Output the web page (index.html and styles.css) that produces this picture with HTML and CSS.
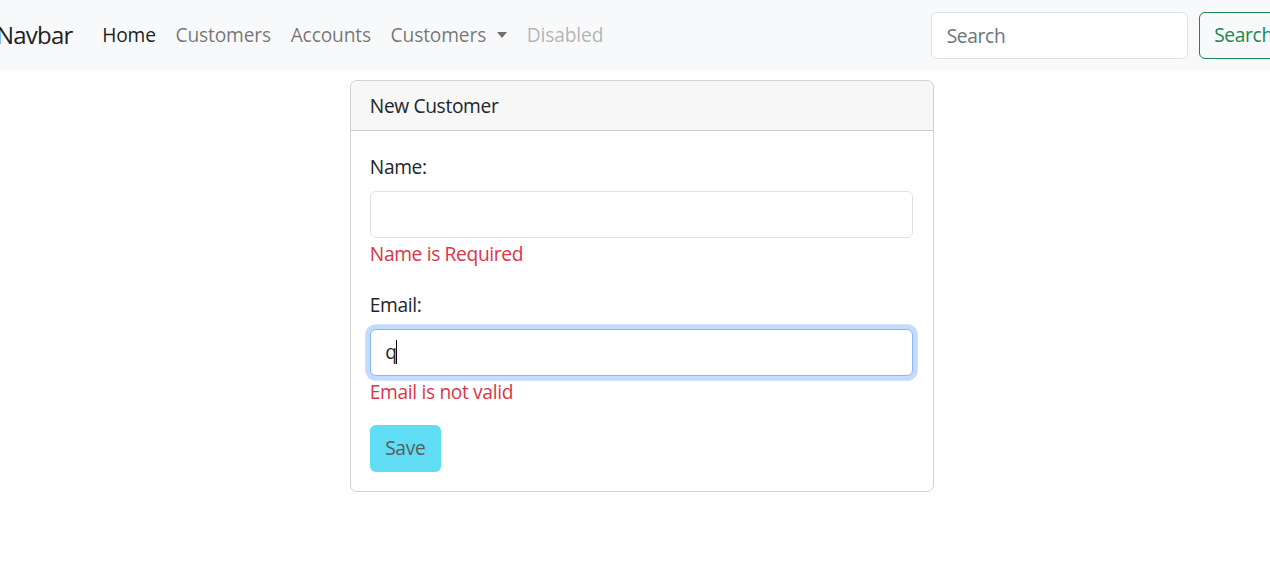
FILE: index.html
```html
<!DOCTYPE html>
<html lang="en">
<head>
<meta charset="utf-8">
<title>New Customer</title>
<link rel="stylesheet" href="styles.css">
</head>
<body>
<div class="page">
  <nav class="navbar">
    <div class="nav-inner">
      <a class="brand" href="#">Navbar</a>
      <ul class="nav-links">
        <li><a class="nav-link active" href="#">Home</a></li>
        <li><a class="nav-link" href="#">Customers</a></li>
        <li><a class="nav-link" href="#">Accounts</a></li>
        <li><a class="nav-link dropdown" href="#">Customers</a></li>
        <li><a class="nav-link disabled" href="#">Disabled</a></li>
      </ul>
      <form class="search-form">
        <input class="search-input" type="search" placeholder="Search">
        <button class="btn-outline-success" type="button">Search</button>
      </form>
    </div>
  </nav>
  <main class="main">
    <div class="card">
      <div class="card-header">New Customer</div>
      <div class="card-body">
        <div class="field">
          <label class="label">Name:</label>
          <input class="control" type="text">
          <div class="error">Name is Required</div>
        </div>
        <div class="field">
          <label class="label">Email:</label>
          <div class="control focused"><span class="typed">q</span><span class="caret"></span></div>
          <div class="error">Email is not valid</div>
        </div>
        <button class="btn-save" type="button" disabled>Save</button>
      </div>
    </div>
  </main>
</div>
</body>
</html>
```

FILE: styles.css
```css
* { box-sizing: border-box; }
html, body { margin: 0; padding: 0; overflow: hidden; }
body {
  font-family: "Open Sans", "Noto Sans", sans-serif;
  font-size: 19.2px;
  line-height: 1.5;
  color: #212529;
  background: #fff;
}
.page {
  width: 1319px;
  margin-left: -16.4px;
}
.navbar {
  background: #f8f9fa;
  height: 70px;
}
.nav-inner {
  height: 100%;
  padding: 0 14.4px;
  display: flex;
  align-items: center;
}
.brand {
  font-size: 24px;
  color: rgba(0,0,0,.9);
  text-decoration: none;
  margin-right: 20px;
  margin-left: -2px;
  letter-spacing: -0.8px;
}
.nav-links {
  list-style: none;
  margin: 0;
  padding: 0;
  display: flex;
  flex: 1;
}
.nav-link {
  display: block;
  padding: 8px 9.8px;
  color: rgba(0,0,0,.55);
  text-decoration: none;
  letter-spacing: -0.15px;
}
.nav-link.active { color: rgba(0,0,0,.9); }
.nav-link.disabled { color: rgba(0,0,0,.3); }
.nav-link.dropdown::after {
  content: "";
  display: inline-block;
  margin-left: 11px;
  vertical-align: 4px;
  border-top: 6px solid;
  border-left: 5.6px solid transparent;
  border-right: 5.6px solid transparent;
}
.search-form {
  display: flex;
  gap: 10.5px;
}
.search-input {
  width: 257px;
  height: 47px;
  border: 1px solid #dee2e6;
  border-radius: 6px;
  padding: 0 14.4px;
  font: inherit;
  letter-spacing: -0.35px;
  background: #fff;
  color: #212529;
}
.search-input::placeholder { color: #6c757d; }
.btn-outline-success {
  height: 47px;
  padding: 0 14.4px;
  border: 1px solid #198754;
  border-radius: 6px;
  background: transparent;
  color: #198754;
  font: inherit;
  letter-spacing: -0.35px;
}
.main {
  display: flex;
  justify-content: center;
  padding-top: 9.6px;
  padding-right: 3px;
}
.card {
  width: 584px;
  border: 1px solid rgba(0,0,0,.175);
  border-radius: 6.75px;
  overflow: hidden;
}
.card-header {
  background: #f7f7f7;
  border-bottom: 1px solid rgba(0,0,0,.175);
  padding: 11px 19.2px 10px;
  letter-spacing: -0.35px;
}
.card-body {
  padding: 22px 19.2px 19px;
}
.field { margin-bottom: 22px; }
.label {
  display: block;
  margin-bottom: 9px;
  letter-spacing: -0.35px;
}
.control {
  display: flex;
  align-items: center;
  width: 100%;
  height: 47px;
  border: 1px solid #dee2e6;
  border-radius: 6px;
  padding: 0 14.4px;
  font: inherit;
  background: #fff;
  color: #212529;
}
.control.focused {
  height: 47px;
  border-color: #86b7fe;
  box-shadow: 0 0 0 4.8px rgba(13,110,253,.25);
}
.caret {
  display: inline-block;
  width: 1px;
  height: 24px;
  background: #000;
  margin-left: -1px;
}
.error {
  color: #dc3545;
  margin-top: 2px;
  letter-spacing: -0.35px;
}
.btn-save {
  margin-top: -4px;
  height: 47px;
  padding: 0 14.4px;
  border: 1px solid transparent;
  border-radius: 6px;
  background: #0dcaf0;
  opacity: .65;
  color: #000;
  font: inherit;
  letter-spacing: -0.35px;
}
```
